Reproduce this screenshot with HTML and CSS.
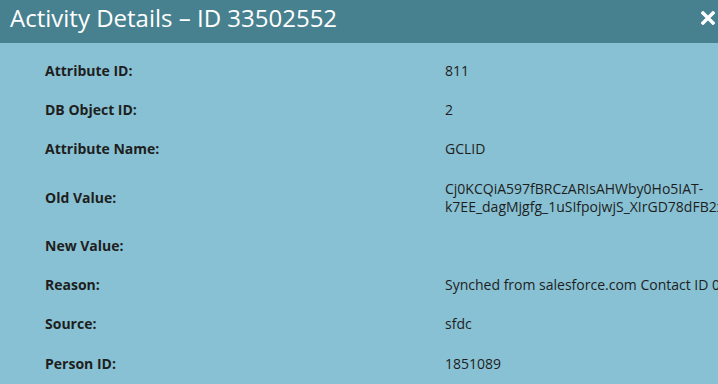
FILE: index.html
```html
<!DOCTYPE html>
<html lang="en">

<head>
    <title>Activity Details</title>
    <meta charset="utf-8">
    <meta name="viewport" content="width=device-width, initial-scale=1.0">
    <link rel="stylesheet" href="styles.css">
</head>

<body>

    <div class="dialog">
        <header class="titlebar">
            <h1>Activity Details &ndash; ID 33502552</h1>
            <button class="luk" aria-label="Close">
                <svg width="14" height="14" viewBox="0 0 14 14">
                    <path d="M2 2 L12 12 M12 2 L2 12" stroke="#fff" stroke-width="3.4" stroke-linecap="square"/>
                </svg>
            </button>
        </header>

        <main class="indhold">
            <div class="row">
                <div class="label">Attribute ID:</div>
                <div class="value">811</div>
            </div>
            <div class="row">
                <div class="label">DB Object ID:</div>
                <div class="value">2</div>
            </div>
            <div class="row">
                <div class="label">Attribute Name:</div>
                <div class="value">GCLID</div>
            </div>
            <div class="row">
                <div class="label">Old Value:</div>
                <div class="value">Cj0KCQiA597fBRCzARIsAHWby0Ho5IAT-k7EE_dagMjgfg_1uSIfpojwjS_XIrGD78dFB2xQaAk1XEALw_wcB</div>
            </div>
            <div class="row">
                <div class="label">New Value:</div>
                <div class="value"></div>
            </div>
            <div class="row">
                <div class="label">Reason:</div>
                <div class="value enlinje">Synched from salesforce.com Contact ID 0031N00001kZbQEQA0</div>
            </div>
            <div class="row">
                <div class="label">Source:</div>
                <div class="value">sfdc</div>
            </div>
            <div class="row">
                <div class="label">Person ID:</div>
                <div class="value">1851089</div>
            </div>
        </main>
    </div>

</body>

</html>
```

FILE: styles.css
```css
body {
    margin: 0;
    background-color: #88c1d3;
    font-family: "Open Sans", "DejaVu Sans", sans-serif;
    overflow: hidden;
}

.dialog {
    width: 718px;
    height: 384px;
    overflow: hidden;
}

.titlebar {
    display: flex;
    justify-content: space-between;
    align-items: flex-start;
    height: 43px;
    background-color: #47818f;
    box-sizing: border-box;
    padding: 2px 0 0 10px;
}

.titlebar h1 {
    margin: 0;
    font-size: 24px;
    font-weight: normal;
    line-height: 32px;
    color: #ffffff;
}

.luk {
    background: none;
    border: none;
    padding: 0;
    margin: 9px 3px 0 0;
    width: 14px;
    height: 14px;
    cursor: pointer;
}

.luk svg {
    display: block;
}

.indhold {
    padding: 9px 0 0 45px;
}

.row {
    display: grid;
    grid-template-columns: 400px 440px;
    align-items: center;
    padding: 10px 0 11px;
    font-size: 14px;
    line-height: 1.3;
    color: #1e1e1e;
}

.label {
    font-weight: bold;
}

.value {
    min-height: 18px;
}

.enlinje {
    white-space: nowrap;
}
```
